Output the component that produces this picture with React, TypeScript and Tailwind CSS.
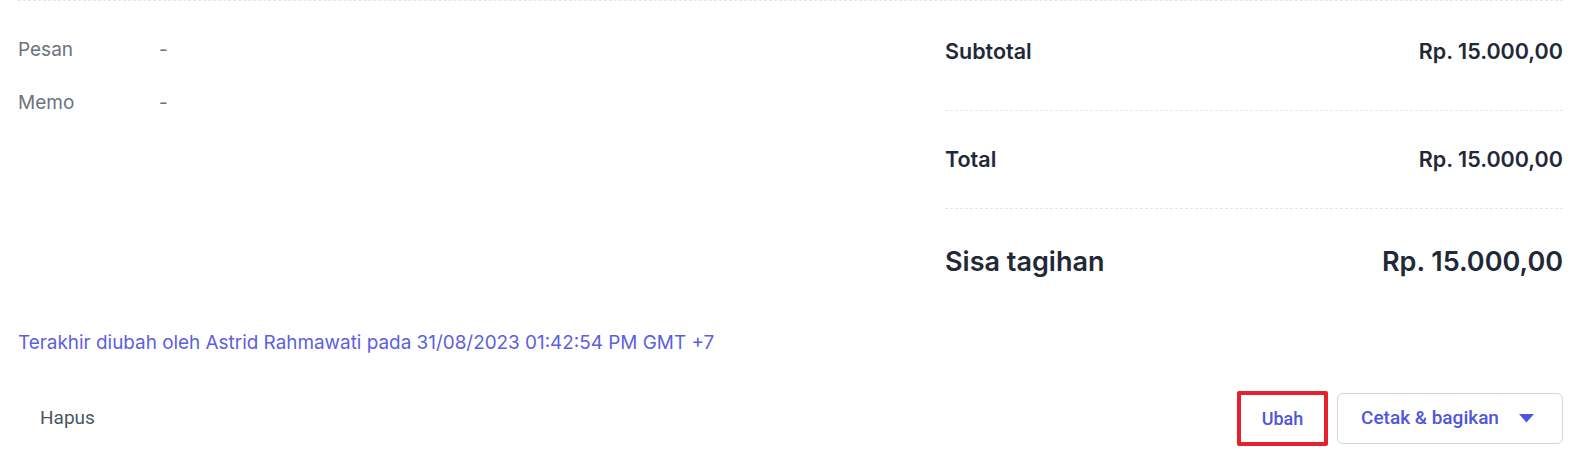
import React from "react";

export default function App() {
  return (
    <div
      className="w-[1590px] h-[471px] bg-white pl-[18px] pr-[27px] text-[#1f2937]"
      style={{ fontFamily: "Inter, 'Noto Sans', sans-serif" }}
    >
      <div className="border-t border-dashed border-[#e5e7eb] flex justify-between">
        <div className="pt-[37px] flex flex-col gap-[29px] text-[19px] leading-6 text-[#6b7280]">
          <div className="flex">
            <span className="w-[141px]">Pesan</span>
            <span>-</span>
          </div>
          <div className="flex">
            <span className="w-[141px]">Memo</span>
            <span>-</span>
          </div>
        </div>
        <div className="w-[618px]">
          <div className="flex justify-between items-center pt-[36px] pb-[45px] text-[21.5px] font-semibold leading-7 border-b border-dashed border-[#e5e7eb]">
            <span>Subtotal</span>
            <span>Rp. 15.000,00</span>
          </div>
          <div className="flex justify-between items-center pt-[34px] pb-[35px] text-[21.5px] font-semibold leading-7 border-b border-dashed border-[#e5e7eb]">
            <span>Total</span>
            <span>Rp. 15.000,00</span>
          </div>
          <div className="flex justify-between items-center pt-[37px] text-[27px] font-semibold leading-8">
            <span>Sisa tagihan</span>
            <span>Rp. 15.000,00</span>
          </div>
        </div>
      </div>
      <div className="mt-[53px] text-[18.9px] leading-6 text-[#5b5fe0]">
        Terakhir diubah oleh Astrid Rahmawati pada 31/08/2023 01:42:54 PM GMT +7
      </div>
      <div
        className="mt-[36px] flex items-center justify-between"
        style={{ fontFamily: "Roboto, 'Noto Sans', sans-serif" }}
      >
        <button className="ml-[22px] text-[19px] text-[#4b5563]">Hapus</button>
        <div className="flex items-center gap-[9px]">
          <button className="w-[91px] h-[55px] border-4 border-[#e5212b] rounded-[2px] text-[18px] font-medium text-[#4f55dc]">
            Ubah
          </button>
          <button className="w-[226px] h-[51px] border border-[#d1d5db] rounded-md flex items-center justify-between pl-[23px] pr-[28px] text-[19px] font-medium text-[#4f55dc]">
            <span>Cetak &amp; bagikan</span>
            <svg width="15" height="9" viewBox="0 0 15 9">
              <path d="M0 0 H15 L7.5 8.5 Z" fill="#4f55dc" />
            </svg>
          </button>
        </div>
      </div>
    </div>
  );
}
